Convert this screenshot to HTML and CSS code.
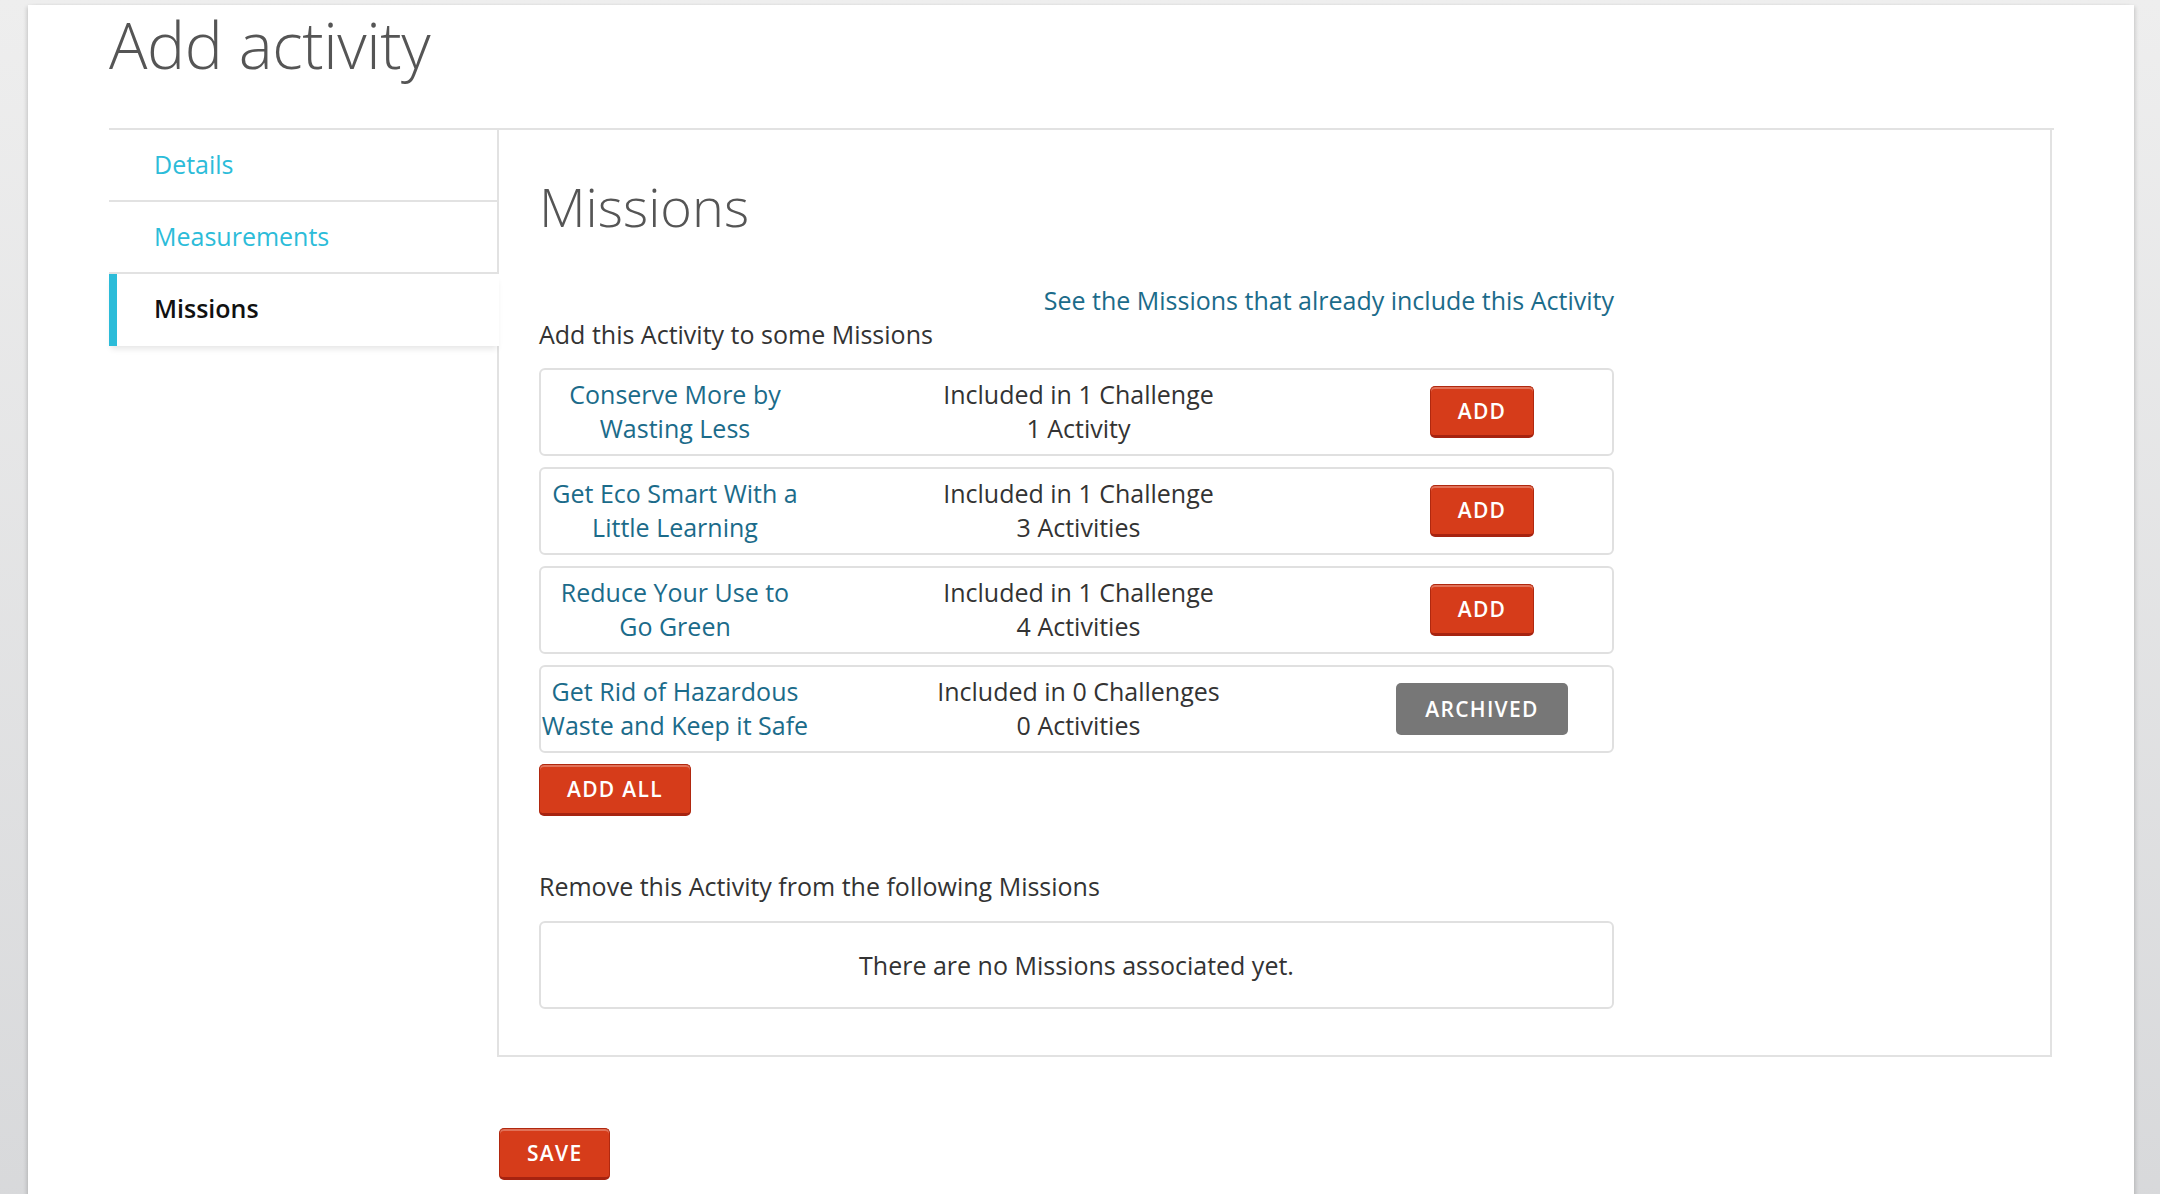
FILE: index.html
```html
<!DOCTYPE html>
<html lang="en">
<head>
<meta charset="utf-8">
<title>Add activity</title>
<link rel="stylesheet" href="styles.css">
</head>
<body>
<div class="page">
  <h1 class="page-title">Add activity</h1>

  <div class="editor">
    <nav class="tabs">
      <a class="tab" href="#">Details</a>
      <a class="tab" href="#">Measurements</a>
      <a class="tab tab-active" href="#">Missions</a>
    </nav>

    <section class="panel">
      <h2 class="panel-title">Missions</h2>

      <div class="missions">
        <div class="missions-link"><a href="#">See the Missions that already include this Activity</a></div>
        <p class="label">Add this Activity to some Missions</p>

        <div class="mission-row">
          <a class="mission-name" href="#">Conserve More by Wasting Less</a>
          <div class="mission-stats">
            <div>Included in 1 Challenge</div>
            <div>1 Activity</div>
          </div>
          <div class="mission-action"><button class="btn btn-red">ADD</button></div>
        </div>

        <div class="mission-row">
          <a class="mission-name" href="#">Get Eco Smart With a Little Learning</a>
          <div class="mission-stats">
            <div>Included in 1 Challenge</div>
            <div>3 Activities</div>
          </div>
          <div class="mission-action"><button class="btn btn-red">ADD</button></div>
        </div>

        <div class="mission-row">
          <a class="mission-name" href="#">Reduce Your Use to Go&nbsp;Green</a>
          <div class="mission-stats">
            <div>Included in 1 Challenge</div>
            <div>4 Activities</div>
          </div>
          <div class="mission-action"><button class="btn btn-red">ADD</button></div>
        </div>

        <div class="mission-row">
          <a class="mission-name" href="#">Get Rid of Hazardous Waste and Keep it Safe</a>
          <div class="mission-stats">
            <div>Included in 0 Challenges</div>
            <div>0 Activities</div>
          </div>
          <div class="mission-action"><button class="btn btn-gray">ARCHIVED</button></div>
        </div>

        <button class="btn btn-red">ADD ALL</button>

        <p class="label label-remove">Remove this Activity from the following Missions</p>
        <div class="empty-box">There are no Missions associated yet.</div>
      </div>
    </section>
  </div>

  <div class="form-actions">
    <button class="btn btn-red">SAVE</button>
  </div>
</div>
</body>
</html>
```

FILE: styles.css
```css
* {
  box-sizing: border-box;
}

html, body {
  margin: 0;
  min-height: 100%;
}

body {
  background: linear-gradient(to bottom, #eeeeee 0%, #d7d8da 100%);
  font-family: "Open Sans", "Liberation Sans", sans-serif;
  font-size: 25px;
  color: #333;
}

a {
  text-decoration: none;
}

.page {
  margin: 0 26px 0 28px;
  min-height: 1194px;
  padding: 0 80px 60px 81px;
  background: #fff;
  box-shadow: -3px 0 4px -2px rgba(0, 0, 0, 0.18), 3px 0 4px -2px rgba(0, 0, 0, 0.18);
}

.page-title {
  margin: 5px 0 43px;
  font-size: 64px;
  font-weight: 300;
  letter-spacing: -0.4px;
  line-height: 80px;
  color: #555;
}

/* tabbed editor: nav on the left, panel on the right */
.editor {
  display: flex;
  border-top: 2px solid #e2e2e2;
}

.tabs {
  display: flex;
  flex-direction: column;
  width: 388px;
  flex: none;
}

.tab {
  display: block;
  height: 72px;
  padding: 17px 0 0 45px;
  border-bottom: 2px solid #e2e2e2;
  color: #2cbcd9;
  line-height: 34px;
}

.tab-active {
  position: relative;
  z-index: 1;
  margin-right: -2px;
  padding-left: 37px;
  border-left: 8px solid #2cbcd9;
  border-bottom: none;
  background: #fff;
  color: #111;
  font-weight: 600;
  box-shadow: 0 5px 6px -2px rgba(0, 0, 0, 0.1);
}

.panel {
  flex: 1;
  margin-right: 2px;
  padding: 39px 40px 46px;
  border: 2px solid #e2e2e2;
  border-top: none;
}

.panel-title {
  margin: 0 0 39px;
  font-size: 54px;
  font-weight: 300;
  line-height: 75px;
  color: #555;
}

.missions {
  width: 1075px;
}

.missions-link {
  text-align: right;
  line-height: 34px;
}

.missions-link a {
  color: #1b6b8a;
}

.label {
  margin: 0 0 17px;
  line-height: 34px;
  color: #333;
}

.label-remove {
  margin-top: 53px;
  margin-bottom: 18px;
}

.mission-row {
  display: grid;
  grid-template-columns: 268px 1fr 268px;
  align-items: center;
  height: 88px;
  margin-bottom: 11px;
  padding-bottom: 3px;
  border: 2px solid #e0e0e0;
  border-radius: 6px;
  text-align: center;
  line-height: 34px;
}

.mission-name {
  color: #1b6b8a;
}

.mission-stats {
  color: #333;
  padding-left: 4px;
}

.mission-action {
  display: flex;
  justify-content: center;
  padding-left: 8px;
  margin-top: 3px;
}

.btn {
  height: 52px;
  padding: 0 27px;
  border-radius: 5px;
  font-family: "Open Sans", "Liberation Sans", sans-serif;
  font-size: 21px;
  font-weight: 600;
  letter-spacing: 1.3px;
  color: #fff;
  cursor: pointer;
}

.btn-red {
  background: #d63c1a;
  border: 1px solid #b0280f;
  border-bottom: 3px solid #a62310;
  box-shadow: inset 0 2px 0 rgba(255, 255, 255, 0.28);
}

.btn-gray {
  background: #777;
  border: none;
  padding: 0 29px;
}

.empty-box {
  height: 88px;
  border: 2px solid #e0e0e0;
  border-radius: 6px;
  text-align: center;
  line-height: 84px;
  color: #333;
}

.form-actions {
  padding: 71px 0 0 390px;
}
```
